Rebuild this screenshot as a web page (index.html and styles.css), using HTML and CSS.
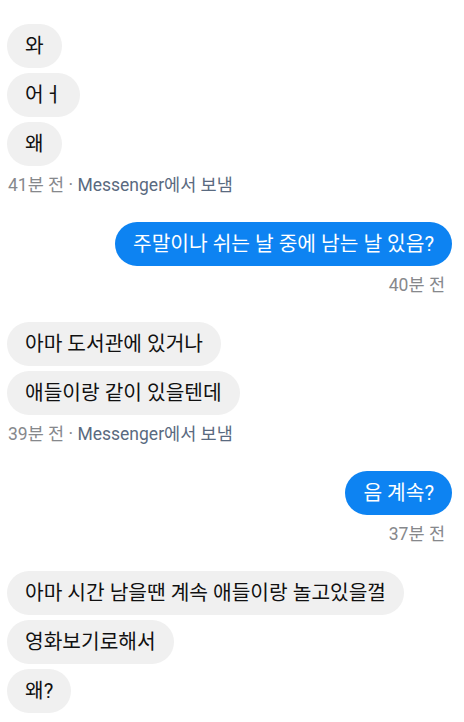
FILE: index.html
```html
<!DOCTYPE html>
<html lang="ko">
<head>
<meta charset="utf-8">
<link rel="stylesheet" href="styles.css">
</head>
<body>
<div class="chat">
  <div class="group in">
    <div class="bubble">와</div>
    <div class="bubble">어ㅓ</div>
    <div class="bubble">왜</div>
    <div class="meta">41분 전 · <span class="src">Messenger에서 보냄</span></div>
  </div>
  <div class="group out">
    <div class="bubble">주말이나 쉬는 날 중에 남는 날 있음?</div>
    <div class="meta">40분 전</div>
  </div>
  <div class="group in">
    <div class="bubble">아마 도서관에 있거나</div>
    <div class="bubble">애들이랑 같이 있을텐데</div>
    <div class="meta">39분 전 · <span class="src">Messenger에서 보냄</span></div>
  </div>
  <div class="group out">
    <div class="bubble">음 계속?</div>
    <div class="meta">37분 전</div>
  </div>
  <div class="group in">
    <div class="bubble">아마 시간 남을땐 계속 애들이랑 놀고있을껄</div>
    <div class="bubble">영화보기로해서</div>
    <div class="bubble">왜?</div>
  </div>
</div>
</body>
</html>
```
FILE: styles.css
```css
html, body {
  margin: 0;
  padding: 0;
  background: #ffffff;
}
body {
  font-family: "Roboto", "Noto Sans CJK KR", sans-serif;
  width: 464px;
  height: 722px;
  overflow: hidden;
}
.chat {
  display: flex;
  flex-direction: column;
  gap: 27px;
  padding: 24px 12px 0 7px;
}
.group {
  display: flex;
  flex-direction: column;
  gap: 5px;
}
.group.in {
  align-items: flex-start;
}
.group.out {
  align-items: flex-end;
}
.bubble {
  font-size: 20.3px;
  line-height: 24px;
  padding: 10px 18px;
  border-radius: 22px;
  background: #f0f0f0;
  color: #111111;
  white-space: nowrap;
}
.out .bubble {
  background: #0d83f2;
  color: #ffffff;
}
.meta {
  margin-top: 4px;
  font-size: 17.5px;
  line-height: 20px;
  color: #86888c;
  padding-left: 1px;
}
.out .meta {
  padding-right: 7px;
}
.src {
  color: #5a6a80;
}
```
